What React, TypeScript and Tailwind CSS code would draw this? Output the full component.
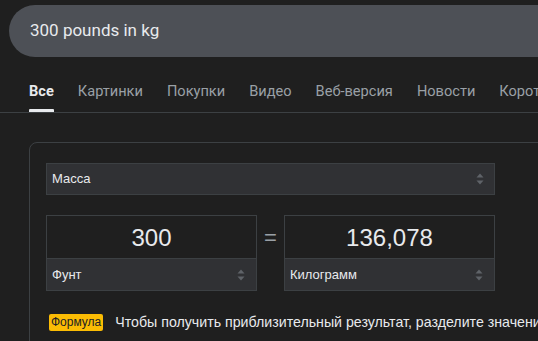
import React from "react";

function Arrows({ className = "" }: { className?: string }) {
  return (
    <svg width="8" height="12" viewBox="0 0 8 12" className={className}>
      <path d="M4 0.5 L7.5 4.5 H0.5 Z" fill="#5f6368" />
      <path d="M4 11.5 L7.5 7.5 H0.5 Z" fill="#5f6368" />
    </svg>
  );
}

function UnitBox({ value, unit }: { value: string; unit: string }) {
  return (
    <div className="w-[211px] border border-[#3c4043] flex flex-col">
      <div className="h-[42px] flex items-center justify-center text-[24px] text-[#e8eaed] bg-[#1f1f1f] pt-[1px]">
        {value}
      </div>
      <div className="h-[32px] border-t border-[#3c4043] bg-[#303134] flex items-center justify-between pl-[5px] pr-[11px] text-[13px] text-[#e8eaed]">
        <span>{unit}</span>
        <Arrows />
      </div>
    </div>
  );
}

export default function App() {
  const tabs = ["Картинки", "Покупки", "Видео", "Веб-версия", "Новости", "Короткие видео"];
  return (
    <div
      className="w-[538px] h-[341px] overflow-hidden bg-[#1f1f1f] relative"
      style={{ fontFamily: "Arial, 'Liberation Sans', sans-serif" }}
    >
      <div className="pt-[5px] pl-[9px]">
        <div className="h-[52px] w-[600px] rounded-full bg-[#4d5056] flex items-center pl-[21px] text-[17px] text-[#e8eaed] font-['Roboto',sans-serif]">
          300 pounds in kg
        </div>
      </div>
      <div className="border-b border-[#3c4043] h-[56px] flex items-start pl-[29px] gap-[24px] whitespace-nowrap text-[14.6px] text-[#9aa0a6] font-['Roboto',sans-serif]">
        <div className="flex flex-col items-stretch pt-[26px] h-full">
          <span className="text-[#e8eaed] font-bold leading-[16px]">Все</span>
          <span className="mt-auto h-[3px] bg-[#e8eaed] rounded-t-[1px]" />
        </div>
        {tabs.map((t) => (
          <span key={t} className="pt-[26px] leading-[16px]">{t}</span>
        ))}
      </div>
      <div className="ml-[29px] mt-[29px] w-[600px] h-[300px] border border-[#3c4043] rounded-[8px] pl-[16px] pt-[20px]">
        <div className="w-[449px] h-[32px] bg-[#303134] border border-[#3c4043] flex items-center justify-between pl-[5px] pr-[10px] text-[13px] text-[#e8eaed]">
          <span>Масса</span>
          <Arrows />
        </div>
        <div className="mt-[20px] flex items-start">
          <UnitBox value="300" unit="Фунт" />
          <div className="w-[27px] h-[44px] flex items-center justify-center text-[22px] text-[#9aa0a6]">=</div>
          <UnitBox value="136,078" unit="Килограмм" />
        </div>
        <div className="mt-[21px] flex items-center whitespace-nowrap">
          <span className="ml-[3px] bg-[#fbbc04] text-[#202124] text-[12px] leading-[17px] px-[2px] rounded-[2px]">Формула</span>
          <span className="ml-[12px] text-[14.2px] text-[#e8eaed]">Чтобы получить приблизительный результат, разделите значение массы на 2,205</span>
        </div>
      </div>
    </div>
  );
}
